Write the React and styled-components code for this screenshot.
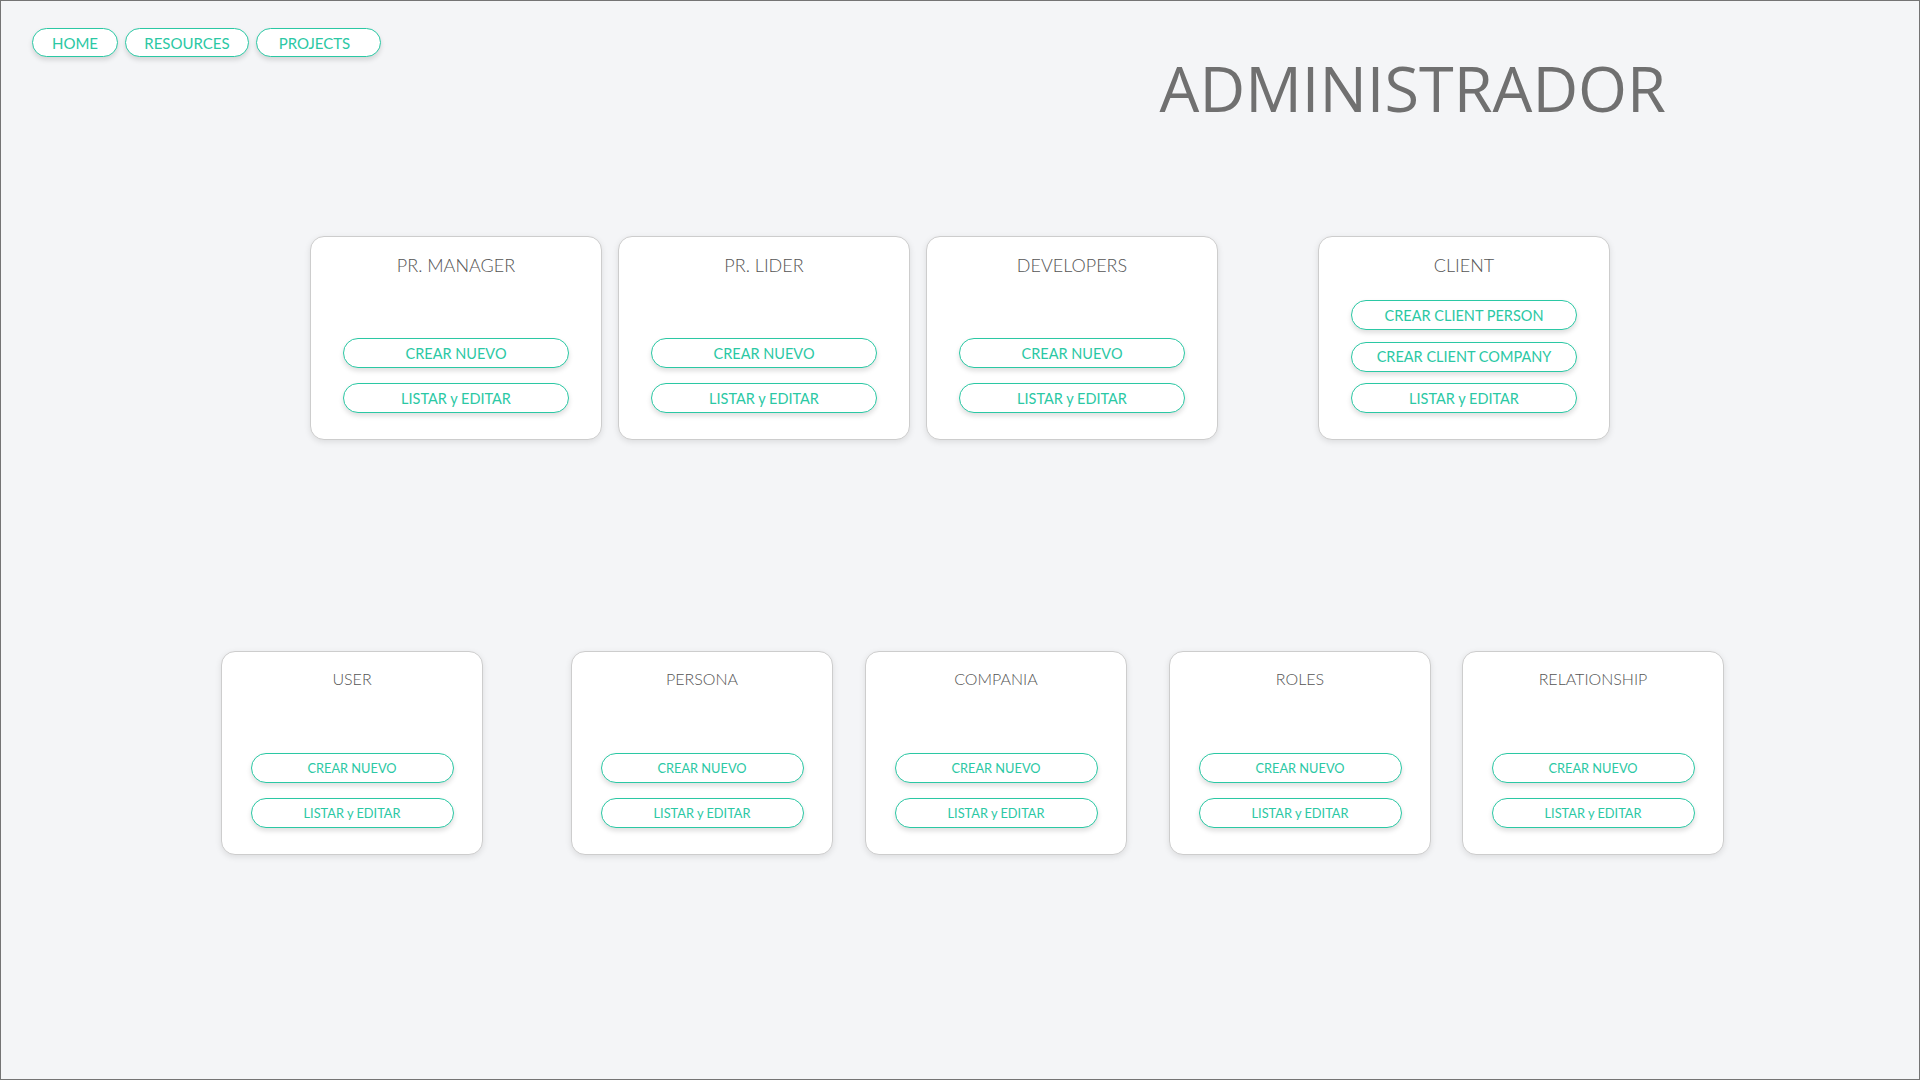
import styled, { createGlobalStyle } from "styled-components";

const GlobalStyle = createGlobalStyle`
  html, body {
    margin: 0;
    padding: 0;
  }
  body {
    background: #f4f5f7;
    font-family: "Lato", "Open Sans", sans-serif;
  }
  * {
    box-sizing: border-box;
  }
`;

const TEAL = "#2bc8a4";

const topCards = [
  { title: "PR. MANAGER", space: 0, buttons: ["CREAR NUEVO", "LISTAR y EDITAR"] },
  { title: "PR. LIDER", space: 16, buttons: ["CREAR NUEVO", "LISTAR y EDITAR"] },
  { title: "DEVELOPERS", space: 16, buttons: ["CREAR NUEVO", "LISTAR y EDITAR"] },
  {
    title: "CLIENT",
    space: 100,
    tight: true,
    buttons: ["CREAR CLIENT PERSON", "CREAR CLIENT COMPANY", "LISTAR y EDITAR"],
  },
];

const bottomCards = [
  { title: "USER", space: 0 },
  { title: "PERSONA", space: 88 },
  { title: "COMPANIA", space: 32 },
  { title: "ROLES", space: 42 },
  { title: "RELATIONSHIP", space: 31 },
];

const App = () => {
  return (
    <Page>
      <GlobalStyle />
      <Header>
        <Nav>
          <NavButton $w={86}>HOME</NavButton>
          <NavButton $w={124}>RESOURCES</NavButton>
          <NavButton $w={125} $pr={8}>
            PROJECTS
          </NavButton>
        </Nav>
        <Title>ADMINISTRADOR</Title>
      </Header>

      <CardRow $top={112} $start={310}>
        {topCards.map((c) => (
          <Card key={c.title} $w={292} $space={c.space}>
            <CardTitle $size={18} $pad={18}>
              {c.title}
            </CardTitle>
            <Actions $gap={c.tight ? 11.5 : 15}>
              {c.buttons.map((b) => (
                <ActionButton key={b} $w={226} $size={14.5}>
                  {b}
                </ActionButton>
              ))}
            </Actions>
          </Card>
        ))}
      </CardRow>

      <CardRow $top={211} $start={221}>
        {bottomCards.map((c) => (
          <Card key={c.title} $w={262} $space={c.space}>
            <CardTitle $size={16} $pad={17}>
              {c.title}
            </CardTitle>
            <Actions $gap={15}>
              <ActionButton $w={203} $size={12.8}>
                CREAR NUEVO
              </ActionButton>
              <ActionButton $w={203} $size={12.8}>
                LISTAR y EDITAR
              </ActionButton>
            </Actions>
          </Card>
        ))}
      </CardRow>
    </Page>
  );
};

const Page = styled.div`
  width: 100vw;
  height: 100vh;
  border: 1px solid #747474;
  background: #f4f5f7;
  overflow: hidden;
`;

const Header = styled.header`
  display: flex;
  align-items: flex-start;
  padding: 27px 0 0 31px;
`;

const Nav = styled.nav`
  display: flex;
  gap: 7px;
`;

const NavButton = styled.button`
  width: ${(p) => p.$w}px;
  height: 29px;
  padding: 0 ${(p) => p.$pr || 0}px 0 0;
  border: 1px solid ${TEAL};
  border-radius: 15px;
  background: #fff;
  color: ${TEAL};
  font-family: "Lato", sans-serif;
  font-size: 15px;
  box-shadow: 0 3px 5px rgba(0, 0, 0, 0.13);
  cursor: pointer;
`;

const Title = styled.h1`
  margin: 24px 253px 0 auto;
  font-family: "Open Sans", sans-serif;
  font-weight: 400;
  font-size: 63px;
  line-height: 72px;
  color: #707070;
`;

const CardRow = styled.section`
  display: flex;
  margin-top: ${(p) => p.$top}px;
  padding-left: ${(p) => p.$start - 1}px;
`;

const Card = styled.div`
  width: ${(p) => p.$w}px;
  height: 204px;
  margin-left: ${(p) => p.$space}px;
  display: flex;
  flex-direction: column;
  align-items: center;
  padding-bottom: 26px;
  background: #fff;
  border: 1px solid #cdcdcd;
  border-radius: 14px;
  box-shadow: 0 2px 6px rgba(0, 0, 0, 0.1);
`;

const CardTitle = styled.h2`
  margin: 0;
  padding-top: ${(p) => p.$pad}px;
  font-family: "Lato", sans-serif;
  font-weight: 300;
  font-size: ${(p) => p.$size}px;
  line-height: 1.2;
  color: #555;
`;

const Actions = styled.div`
  margin-top: auto;
  display: flex;
  flex-direction: column;
  gap: ${(p) => p.$gap}px;
`;

const ActionButton = styled.button`
  width: ${(p) => p.$w}px;
  height: 30px;
  padding: 0;
  border: 1px solid ${TEAL};
  border-radius: 16px;
  background: #fff;
  color: ${TEAL};
  font-family: "Lato", sans-serif;
  font-size: ${(p) => p.$size}px;
  box-shadow: 0 3px 5px rgba(0, 0, 0, 0.13);
  cursor: pointer;
`;

export default App;
